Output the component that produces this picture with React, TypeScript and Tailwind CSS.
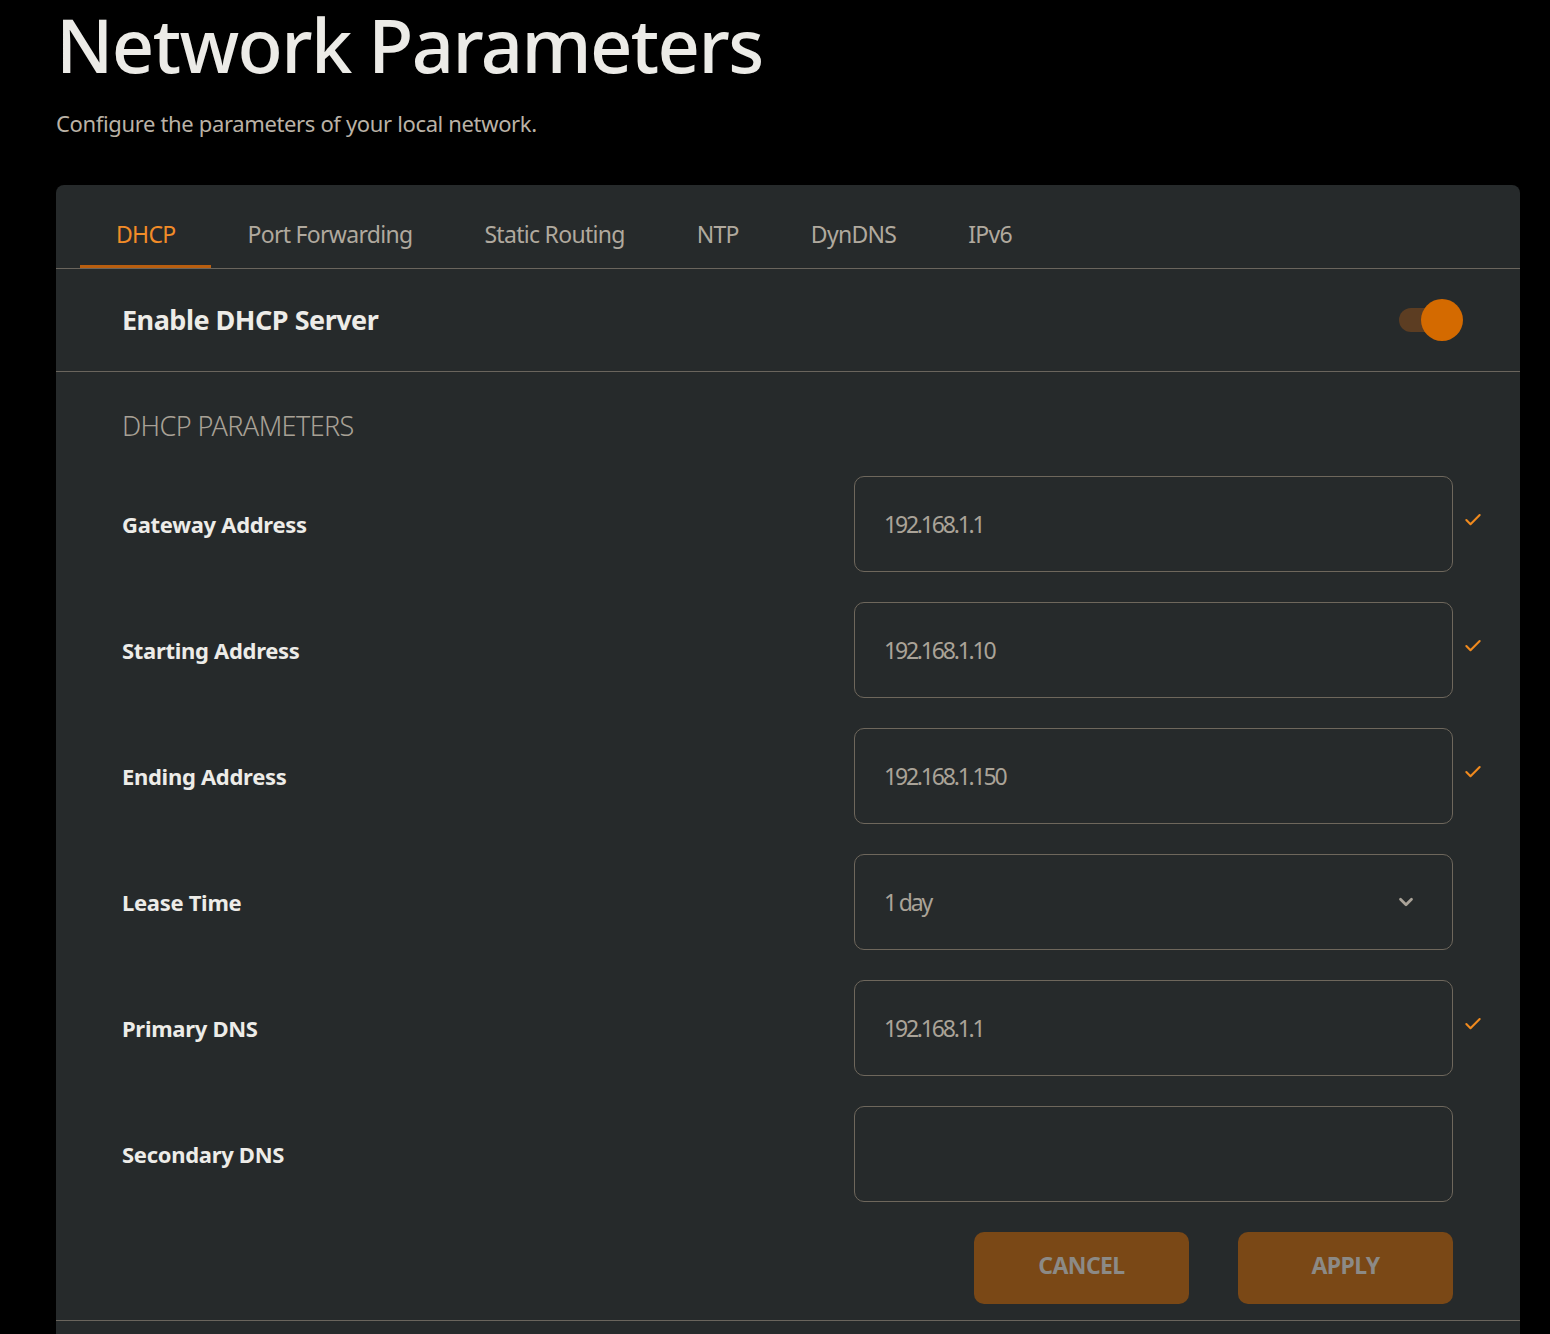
import { Check, ChevronDown } from 'lucide-react'

const tabs = ['DHCP', 'Port Forwarding', 'Static Routing', 'NTP', 'DynDNS', 'IPv6']

type Field = { label: string; value: string; select?: boolean; valid?: boolean }

const fields: Field[] = [
  { label: 'Gateway Address', value: '192.168.1.1', valid: true },
  { label: 'Starting Address', value: '192.168.1.10', valid: true },
  { label: 'Ending Address', value: '192.168.1.150', valid: true },
  { label: 'Lease Time', value: '1 day', select: true },
  { label: 'Primary DNS', value: '192.168.1.1', valid: true },
  { label: 'Secondary DNS', value: '' },
]

function FieldRow({ field }: { field: Field }) {
  return (
    <div className="flex items-center justify-between">
      <span className="text-[22px] font-bold tracking-[-0.3px] text-[#edece8]">{field.label}</span>
      <div className="relative">
        <div className="flex h-[96px] w-[599px] items-center justify-between rounded-[10px] border border-[#6e675c] px-[29px]">
          <span className="text-[23px] tracking-[-2.2px] text-[#aaa398]">{field.value}</span>
          {field.select && <ChevronDown className="mr-[6px] size-[22px] text-[#aaa398]" strokeWidth={3} />}
        </div>
        {field.valid && (
          <Check className="absolute -right-[30px] top-[34px] size-[20px] text-[#f08a1e]" strokeWidth={2.5} />
        )}
      </div>
    </div>
  )
}

export default function App() {
  return (
    <div
      className="min-h-screen bg-black pl-[56px] pr-[30px] pt-[2px]"
      style={{ fontFamily: '"Noto Sans", sans-serif' }}
    >
      <h1 className="text-[74px] font-medium leading-[1.15] tracking-[-1.6px] text-[#ecebe7]">
        Network Parameters
      </h1>
      <p className="mt-[25px] text-[22px] leading-none tracking-[-0.35px] text-[#bab2a6]">
        Configure the parameters of your local network.
      </p>

      <div className="mt-[51px] rounded-t-[8px] bg-[#262a2b] pb-[14px]">
        <div className="flex border-b border-[#6a655d] px-[24px]">
          {tabs.map((t, i) => (
            <div
              key={t}
              className={
                i === 0
                  ? 'flex h-[83px] items-center border-b-[3px] border-[#b95e0f] px-[36px] pt-[18px] text-[23px] tracking-[-0.7px] text-[#f28c28]'
                  : 'flex h-[83px] items-center border-b-[3px] border-transparent px-[36px] pt-[18px] text-[23px] tracking-[-0.7px] text-[#b0a99e]'
              }
            >
              {t}
            </div>
          ))}
        </div>

        <div className="flex h-[103px] items-center justify-between border-b border-[#6a655d] pl-[66px] pr-[57px]">
          <span className="text-[27px] font-bold tracking-[-0.5px] text-[#edece8]">Enable DHCP Server</span>
          <div className="relative h-[42px] w-[64px]">
            <div className="absolute left-0 top-[9px] h-[24px] w-[56px] rounded-full bg-[#5c3d22]" />
            <div className="absolute right-0 top-0 size-[42px] rounded-full bg-[#d46a00]" />
          </div>
        </div>

        <div className="pl-[66px] pr-[67px]">
          <h2 className="pt-[34px] text-[27px] font-light leading-[40px] tracking-[-0.6px] text-[#a8a196]">
            DHCP PARAMETERS
          </h2>
          <div className="mt-[30px] flex flex-col gap-[30px]">
            {fields.map((f) => (
              <FieldRow key={f.label} field={f} />
            ))}
          </div>
          <div className="mt-[30px] flex justify-end gap-[49px]">
            <button className="h-[72px] w-[215px] rounded-[10px] bg-[#7a4816] pb-[5px] text-[23px] font-bold tracking-[-0.6px] text-[#8c8a86]">
              CANCEL
            </button>
            <button className="h-[72px] w-[215px] rounded-[10px] bg-[#7a4816] pb-[5px] text-[23px] font-bold tracking-[-0.6px] text-[#8c8a86]">
              APPLY
            </button>
          </div>
        </div>
        <div className="mt-[16px] border-t border-[#6a655d]" />
      </div>
    </div>
  )
}
